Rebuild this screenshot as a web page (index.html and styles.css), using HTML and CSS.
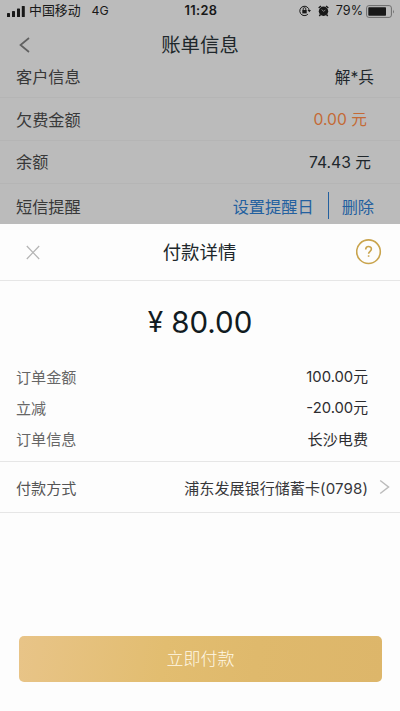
FILE: index.html
```html
<!DOCTYPE html>
<html lang="zh-CN">
<head>
<meta charset="utf-8">
<meta name="viewport" content="width=device-width, initial-scale=1">
<title>付款详情</title>
<link rel="stylesheet" href="styles.css">
</head>
<body>
<div class="phone">
  <section class="bill">
    <div class="status">
      <div class="status-left">
        <svg class="signal" width="18" height="11" viewBox="0 0 18 11"><rect x="0" y="7" width="3" height="4" rx=".6"/><rect x="5" y="5" width="3" height="6" rx=".6"/><rect x="10" y="2.500" width="3" height="8.500" rx=".6"/><rect x="14.800" y="0" width="3" height="11" rx=".6"/></svg>
        <span class="carrier">中国移动</span>
        <span class="network">4G</span>
      </div>
      <span class="clock">11:28</span>
      <div class="status-right">
        <svg width="12" height="12" viewBox="0 0 12 12"><path d="M10.200 5.500A4.700 4.700 0 1 0 8.900 9.200" fill="none" stroke="#181818"/><path d="M8.500 5h3.500l-1.700 2.300z"/><rect x="3.300" y="5" width="4.400" height="3.400"/><path d="M4.200 5V3.900a1.300 1.300 0 0 1 2.600 0V5" fill="none" stroke="#181818" stroke-width=".9"/></svg>
        <svg class="alarm" width="11" height="12" viewBox="0 0 11 12"><circle cx="5.500" cy="6.200" r="4.700"/><path d="M.7 3L2.900 1M10.300 3L8.100 1M2.500 9.500L1.300 11M8.500 9.500L9.700 11" stroke="#181818" stroke-width="1.400"/><path d="M3.600 4.600l2 1.700 1.800-1.300" fill="none" stroke="#aaa" stroke-width=".7"/></svg>
        <span class="percent">79%</span>
        <svg width="29" height="13" viewBox="0 0 29 13"><rect x=".6" y=".6" width="24.800" height="11.800" rx="2.300" fill="none" stroke="#6c6c6c"/><rect x="2.300" y="2.300" width="17.700" height="8.400" rx=".7"/><path d="M27 4.500q1.600 2 0 4z" fill="#6c6c6c"/></svg>
      </div>
    </div>
    <header class="nav">
      <svg class="back" width="11" height="16" viewBox="0 0 11 16"><path d="M10 1L1.500 8 10 15"/></svg>
      <h1>账单信息</h1>
    </header>
    <div class="row customer"><span>客户信息</span><span class="value">解*兵</span></div>
    <div class="row arrears"><span>欠费金额</span><span class="value orange">0.00 元</span></div>
    <div class="row balance"><span>余额</span><span class="value">74.43 元</span></div>
    <div class="row reminder"><span>短信提醒</span><span class="links"><a>设置提醒日</a><i></i><a>删除</a></span></div>
  </section>
  <section class="sheet">
    <header class="sheet-head">
      <svg class="close" width="14" height="15" viewBox="0 0 14 15"><path d="M.8 1l12.400 13M13.200 1L.8 14"/></svg>
      <h2>付款详情</h2>
      <svg class="help" width="26" height="26" viewBox="0 0 26 26"><circle cx="12.500" cy="12.700" r="11.800"/><path d="M9.700 10.500c0-4 5.700-3.800 5.700-.4 0 2.200-2.800 2.200-2.800 4.600"/><path d="M12.600 16.300v1.500"/></svg>
    </header>
    <div class="amount"><span class="yen">¥</span><span>80.00</span></div>
    <div class="details">
      <div class="detail"><span>订单金额</span><span class="detail-value">100.00元</span></div>
      <div class="detail"><span>立减</span><span class="detail-value">-20.00元</span></div>
      <div class="detail"><span>订单信息</span><span class="detail-value subject">长沙电费</span></div>
    </div>
    <div class="method"><span>付款方式</span><span class="card">浦东发展银行储蓄卡<span class="digits">(0798)</span></span><svg width="11" height="16" viewBox="0 0 11 16"><path d="M1.200 1.500L9.500 8l-8.300 6.500"/></svg></div>
    <div class="action"><button>立即付款</button></div>
  </section>
</div>
</body>
</html>
```
FILE: styles.css
```css
* { box-sizing: border-box; }
body {
  margin: 0;
  font-family: Inter, "Noto Sans CJK SC", sans-serif;
  color: #20272b;
}
h1, h2 { margin: 0; font-weight: 400; }
svg { display: block; flex: none; }
.phone { width: 400px; height: 711px; display: flex; flex-direction: column; overflow: hidden; }

.bill { height: 224px; flex: none; background: #bbb; overflow: hidden; }
.status {
  height: 22px;
  display: grid;
  grid-template-columns: 1fr auto 1fr;
  align-items: center;
  padding: 0 5px 0 7px;
  color: #181818;
  fill: #181818;
  font-size: 12px;
  line-height: 22px;
}
.status-left, .status-right { display: flex; align-items: center; }
.carrier { margin-left: 4px; font-size: 12.9px; }
.network { margin-left: 11px; font-size: 12.3px; }
.clock { font-size: 12.8px; font-weight: 600; letter-spacing: .35px; }
.status-right { justify-content: flex-end; }
.alarm { margin-left: 7px; }
.percent { margin: 0 3px 0 7px; font-size: 12.6px; }
.nav { height: 44px; display: grid; grid-template-columns: 31px 1fr 31px; align-items: center; }
.back { margin-left: 19px; fill: none; stroke: #606060; stroke-width: 1.7; }
.nav h1 { font-size: 19.4px; line-height: 44px; padding-top: 1px; text-align: center; }
.row {
  display: flex;
  justify-content: space-between;
  align-items: center;
  padding: 0 26px 2px 16px;
  border-bottom: 1px solid #b5b5b5;
  font-size: 16.2px;
  color: #383838;
}
.value { color: #20272b; font-size: 15.7px; }
.customer { height: 32px; padding-bottom: 12px; }
.customer .value { padding-top: 2px; }
.arrears { height: 43px; padding-right: 33px; padding-bottom: 1px; }
.balance { height: 43px; padding-right: 29px; }
.reminder { height: 46px; border-bottom: 0; padding-bottom: 3px; }
.orange { color: #c46a36; }
.links { display: flex; align-items: center; color: #23609f; }
.links i { width: 1px; height: 27px; margin: 0 13px 0 14px; background: #23609f; }

.sheet { flex: 1; display: flex; flex-direction: column; background: #fdfdfd; }
.sheet-head {
  height: 57px;
  display: grid;
  grid-template-columns: 1fr auto 1fr;
  align-items: center;
  padding: 0 18px 0 26px;
  border-bottom: 1px solid #e6e6e6;
}
.sheet-head h2 { font-size: 18.4px; line-height: 26px; margin-right: 9px; }
.close { fill: none; stroke: #b4b4b4; stroke-width: 1.2; }
.help { justify-self: end; fill: none; stroke: #c9a44d; stroke-width: 1.6; }
.amount {
  height: 79px;
  display: flex;
  justify-content: center;
  align-items: center;
  gap: 8px;
  padding-top: 2px;
  font-size: 29.5px;
  color: #111b21;
}
.yen { font-size: 28px; }
.details { height: 102px; border-bottom: 1px solid #e6e6e6; }
.detail { height: 31px; display: flex; justify-content: space-between; align-items: center; padding: 0 32px 0 16px; font-size: 15.1px; color: #666; }
.detail-value { color: #2d2d30; font-size: 14.8px; }
.subject { font-size: 15.1px; }
.method { height: 51px; display: flex; align-items: center; padding: 0 10px 1px 16px; border-bottom: 1px solid #e6e6e6; font-size: 15.1px; color: #555; }
.card { margin-left: auto; color: #37373a; }
.digits { letter-spacing: .1px; }
.method svg { margin-left: 11px; fill: none; stroke: #bcbcbc; stroke-width: 1.5; }
.action { margin-top: auto; padding: 0 18px 29px 19px; }
button {
  display: block;
  width: 100%;
  height: 46px;
  padding: 0 0 3px;
  border: 0;
  border-radius: 5px;
  background: linear-gradient(100deg, #e8c488 0%, #e2bd70 40%, #dfb96c 65%, #ddb66a 100%);
  color: #fff8e6;
  font: 300 17px Inter, "Noto Sans CJK SC", sans-serif;
}
```
